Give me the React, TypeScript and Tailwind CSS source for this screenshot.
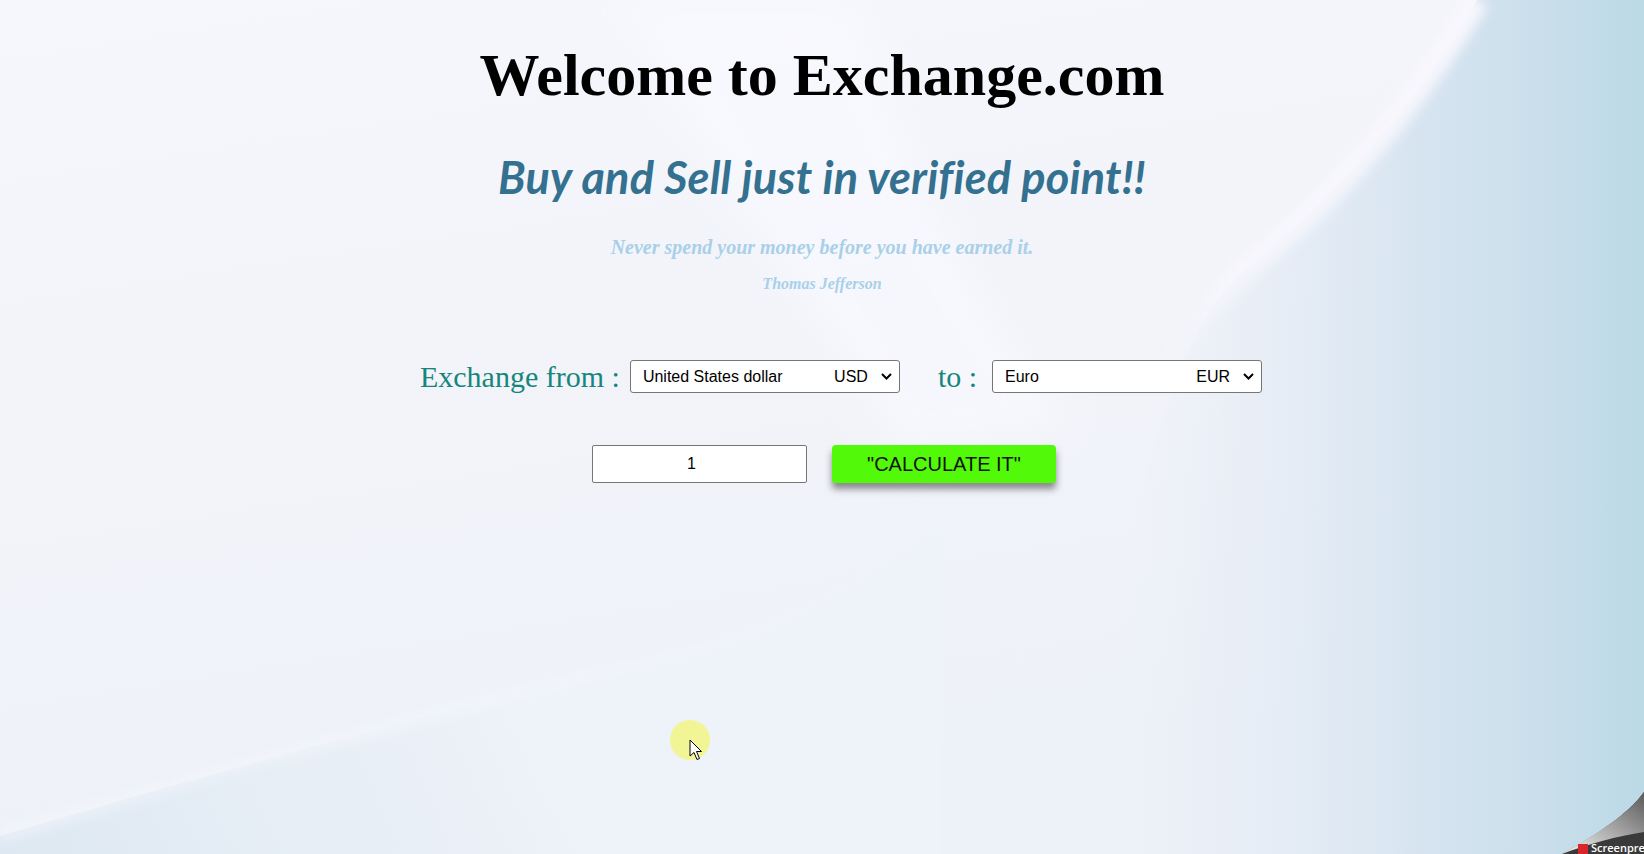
import React from "react";

const serif = "font-['Liberation_Serif','Times_New_Roman',serif]";
const sans = "font-['Liberation_Sans',Arial,sans-serif]";

export default function App() {
  return (
    <div className="relative h-[854px] w-full overflow-hidden bg-[#f4f5fb]">
      <Backdrop />

      <main className="relative flex flex-col items-center pt-[45px]">
        {/* HEADER */}
        <h1 className={`${serif} text-[60px] font-bold leading-[60px] text-black`}>
          Welcome to Exchange.com
        </h1>

        <h2 className="mt-[50px] font-['Lato','Open_Sans',sans-serif] text-[45px] font-bold italic leading-[45px] tracking-[0.2px] text-[#34708f]">
          Buy and Sell just in verified point!!
        </h2>

        {/* QUOTE */}
        <p className={`${serif} mt-[37px] text-[20px] font-bold italic leading-[20px] text-[#a9d0e8]`}>
          Never spend your money before you have earned it.
        </p>
        <p className={`${serif} mt-[19px] text-[16px] font-bold italic leading-[16px] text-[#a9d0e8]`}>
          Thomas Jefferson
        </p>

        {/* CURRENCY PICKERS */}
        <div className="mt-[68px] flex h-[33px] items-center pl-[38px]">
          <span className={`${serif} text-[30px] leading-[30px] text-[#16867d]`}>
            Exchange from :
          </span>
          <FakeSelect className="ml-[10px]" label="United States dollar" code="USD" />
          <span className={`${serif} ml-[38px] text-[30px] leading-[30px] text-[#16867d]`}>
            to :
          </span>
          <FakeSelect className="ml-[15px]" label="Euro" code="EUR" />
        </div>

        {/* AMOUNT + ACTION */}
        <div className="mt-[52px] flex items-center pl-[4px]">
          <input
            type="text"
            defaultValue="1"
            readOnly
            className={`${sans} h-[38px] w-[215px] rounded-[2px] border border-[#767676] bg-white pr-[16px] text-center text-[16px] text-black outline-none`}
          />
          <button
            className={`${sans} ml-[25px] h-[38px] w-[224px] rounded-[4px] bg-[#52fa0a] text-[20px] text-[#111] shadow-[0_6px_7px_rgba(50,50,50,0.55)]`}
          >
            "CALCULATE IT"
          </button>
        </div>
      </main>

      {/* recorder cursor highlight */}
      <div className="pointer-events-none absolute left-[670px] top-[720px] h-[40px] w-[40px] rounded-full bg-[#f2f58a]/90" />
      <svg className="pointer-events-none absolute left-[689px] top-[739px]" width="14" height="22" viewBox="0 0 14 22">
        <path d="M1 1 L1 17 L5 13.5 L8 20.5 L10.5 19.5 L7.5 12.5 L12.5 12.5 Z" fill="#fff" stroke="#000" strokeWidth="1" strokeLinejoin="round" />
      </svg>

      {/* page curl watermark */}
      <div className="pointer-events-none absolute bottom-0 right-0 h-[62px] w-[86px] overflow-hidden">
        <svg className="absolute inset-0" width="86" height="62" viewBox="0 0 86 62">
          <defs>
            <linearGradient id="curl" x1="0" y1="1" x2="1" y2="0">
              <stop offset="0" stopColor="#f4f4f4" />
              <stop offset="0.5" stopColor="#a9a9a9" />
              <stop offset="1" stopColor="#5a5a5a" />
            </linearGradient>
          </defs>
          <path d="M86 0 C70 22 40 42 4 62 L86 62 Z" fill="#3a3a3a" />
          <path d="M86 0 C72 20 46 38 4 62 C30 52 60 44 86 40 Z" fill="url(#curl)" />
          <rect x="20" y="52" width="10" height="10" fill="#d8262c" />
        </svg>
        <span className="absolute left-[33px] top-[48px] font-['Open_Sans',sans-serif] text-[11px] font-semibold text-white">
          Screenpresso
        </span>
      </div>
    </div>
  );
}

function FakeSelect({
  label,
  code,
  className = "",
}: {
  label: string;
  code: string;
  className?: string;
}) {
  return (
    <div
      className={`${sans} ${className} flex h-[33px] w-[270px] items-center rounded-[3px] border border-[#767676] bg-white pl-[12px] pr-[7px] text-[16px] text-black`}
    >
      <span className="flex-1">{label}</span>
      <span>{code}</span>
      <svg className="ml-[13px]" width="11" height="7" viewBox="0 0 11 7">
        <path d="M1 1 L5.5 5.5 L10 1" fill="none" stroke="#000" strokeWidth="2" />
      </svg>
    </div>
  );
}

function Backdrop() {
  return (
    <svg
      className="pointer-events-none absolute inset-0 h-full w-full"
      viewBox="0 0 1644 854"
      preserveAspectRatio="none"
    >
      <defs>
        <linearGradient id="base" x1="0" y1="0" x2="0.3" y2="1">
          <stop offset="0" stopColor="#f6f7fc" />
          <stop offset="0.6" stopColor="#f1f3f9" />
          <stop offset="1" stopColor="#edf1f8" />
        </linearGradient>
        <linearGradient id="blue" x1="1120" y1="0" x2="1644" y2="0" gradientUnits="userSpaceOnUse">
          <stop offset="0" stopColor="#e8eef7" stopOpacity="0" />
          <stop offset="0.3" stopColor="#e2eaf4" stopOpacity="0.7" />
          <stop offset="0.55" stopColor="#d8e5f1" />
          <stop offset="0.8" stopColor="#cadfeb" />
          <stop offset="1" stopColor="#bbd9e6" />
        </linearGradient>
        <linearGradient id="low" x1="0" y1="854" x2="500" y2="640" gradientUnits="userSpaceOnUse">
          <stop offset="0" stopColor="#dbe7f1" />
          <stop offset="1" stopColor="#eef2f9" />
        </linearGradient>
        <linearGradient id="fadeLine" x1="1477" y1="0" x2="1150" y2="380" gradientUnits="userSpaceOnUse">
          <stop offset="0" stopColor="#f8f7fd" stopOpacity="1" />
          <stop offset="0.7" stopColor="#f8f7fd" stopOpacity="0.8" />
          <stop offset="1" stopColor="#f8f7fd" stopOpacity="0" />
        </linearGradient>
        <linearGradient id="fadeLow" x1="0" y1="830" x2="900" y2="520" gradientUnits="userSpaceOnUse">
          <stop offset="0" stopColor="#f7f7fd" stopOpacity="0.9" />
          <stop offset="0.6" stopColor="#f7f7fd" stopOpacity="0.6" />
          <stop offset="1" stopColor="#f7f7fd" stopOpacity="0" />
        </linearGradient>
        <filter id="soft" x="-20%" y="-20%" width="140%" height="140%">
          <feGaussianBlur stdDeviation="6" />
        </filter>
        <filter id="softer" x="-20%" y="-20%" width="140%" height="140%">
          <feGaussianBlur stdDeviation="18" />
        </filter>
      </defs>

      <rect width="1644" height="854" fill="url(#base)" />

      {/* faint diagonal sheen from the top */}
      <path d="M620 0 L860 0 C900 160 980 300 1080 430 L900 460 C820 320 700 160 620 0 Z" fill="#fafaff" opacity="0.6" filter="url(#softer)" />

      {/* right blue swoosh */}
      <path
        d="M1477 0 C1420 95 1345 190 1250 265 C1170 330 1120 520 1090 854 L1644 854 L1644 0 Z"
        fill="url(#blue)"
      />
      <path
        d="M1477 0 C1420 95 1345 190 1250 265 C1210 300 1180 340 1150 390"
        fill="none"
        stroke="url(#fadeLine)"
        strokeWidth="24"
        filter="url(#soft)"
      />

      {/* bottom-left band */}
      <path d="M0 836 C220 770 480 700 700 650 C780 630 860 590 940 530 L940 854 L0 854 Z" fill="url(#low)" opacity="0.85" />
      <path
        d="M0 836 C220 770 480 700 700 650 C780 630 860 590 940 530"
        fill="none"
        stroke="url(#fadeLow)"
        strokeWidth="7"
        filter="url(#soft)"
      />
    </svg>
  );
}
